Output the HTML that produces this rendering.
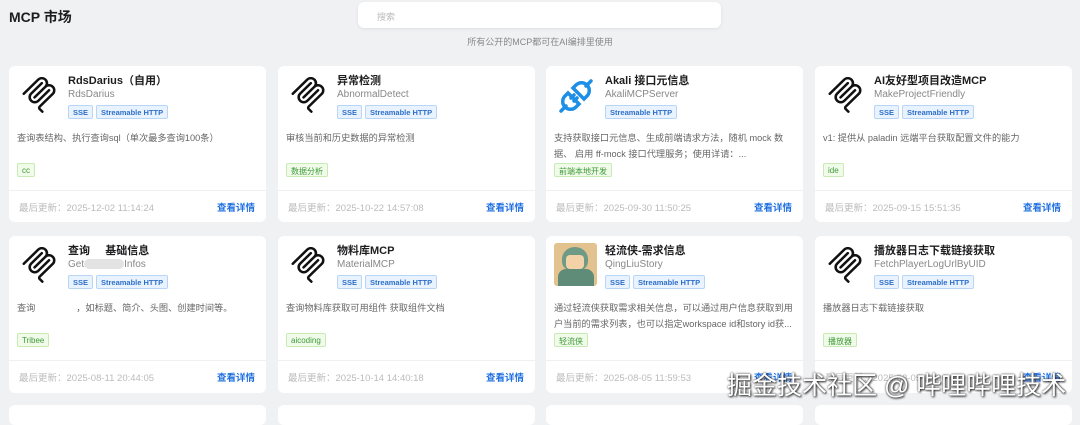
<!DOCTYPE html>
<html><head><meta charset="utf-8"><style>
*{margin:0;padding:0;box-sizing:border-box}
body{width:1080px;height:411px;overflow:hidden;background:#f0f1f3;font-family:"Liberation Sans","Noto Sans CJK SC",sans-serif;position:relative}
.h{position:absolute;left:9px;top:7px;font-size:14px;font-weight:bold;color:#1d1d1f}
.search{position:absolute;left:358px;top:2px;width:363px;height:26px;background:#fff;border-radius:6px;box-shadow:0 1px 3px rgba(0,0,0,.08);font-size:9px;color:#bbb;padding:8px 0 0 19px}
.sub{position:absolute;left:0;width:1080px;text-align:center;top:35px;font-size:9px;color:#888}
.card{position:absolute;width:257px;background:#fff;border-radius:6px}
.r1{top:66px;height:156px}.r2{top:236px;height:157px}.r3{top:405px;height:20px}
.ic{position:absolute;left:12px;top:10px;width:40px;height:40px}
.t{position:absolute;left:59px;top:6px;font-size:11px;font-weight:bold;color:#1d1d1f;white-space:nowrap}
.s{position:absolute;left:59px;top:23px;font-size:10px;color:#888;white-space:nowrap}
.b{position:absolute;top:39px;height:14px;font-size:7.5px;font-weight:bold;color:#2f6fc8;background:#e8f3ff;border:1px solid #b7d6f5;border-radius:2px;padding:2px 4px 0;white-space:nowrap}
.d{position:absolute;left:8px;top:64px;width:242px;font-size:9.2px;line-height:16px;color:#666}
.g{position:absolute;left:8px;height:14px;font-size:8px;color:#3f9a3a;background:#f1fbe9;border:1px solid #c8ebb5;border-radius:2px;padding:2px 4px 0;white-space:nowrap}
.line{position:absolute;left:0;right:0;top:124px;border-top:1px solid #f0f0f0}
.f{position:absolute;left:10px;top:134px;font-size:9.5px;color:#bbb}
.l{position:absolute;right:11px;top:134px;font-size:9.5px;color:#1f6fe0;font-weight:bold}
.wm{position:absolute;left:727px;top:366px;font-size:25px;color:#fff;text-shadow:0 0 2px #333,1px 1px 2px #222;white-space:nowrap}
</style></head><body>
<div class="h">MCP 市场</div>
<div class="search">搜索</div>
<div class="sub">所有公开的MCP都可在AI编排里使用</div>

<svg width="0" height="0" style="position:absolute"><defs><symbol id="mcp" viewBox="0 0 24 24"><path fill="#111" d="M15.688 2.343a2.588 2.588 0 00-3.61 0l-9.626 9.44a.863.863 0 01-1.203 0 .823.823 0 010-1.18l9.626-9.44a4.313 4.313 0 016.016 0 4.116 4.116 0 011.204 3.54 4.3 4.3 0 013.609 1.18l.05.05a4.115 4.115 0 010 5.9l-8.706 8.537a.274.274 0 000 .393l1.788 1.754a.823.823 0 010 1.18.863.863 0 01-1.203 0l-1.788-1.753a1.920 1.920 0 010-2.754l8.706-8.538a2.47 2.47 0 000-3.54l-.05-.049a2.588 2.588 0 00-3.607-.003l-7.172 7.034-.002.002-.098.097a.863.863 0 01-1.204 0 .823.823 0 010-1.18l7.273-7.133a2.47 2.47 0 00-.003-3.537zM14.485 4.703a.823.823 0 000-1.18.863.863 0 00-1.204 0l-7.119 6.982a4.115 4.115 0 000 5.9 4.314 4.314 0 006.016 0l7.12-6.982a.823.823 0 000-1.18.863.863 0 00-1.204 0l-7.119 6.982a2.588 2.588 0 01-3.61 0 2.47 2.47 0 010-3.540l7.12-6.982z"/></symbol></defs></svg>

<!-- row 1 -->
<div class="card r1" style="left:9px">
<svg class="ic" style="left:12px;top:11px;width:36px;height:36px"><use href="#mcp"/></svg>
<div class="t">RdsDarius（自用）</div><div class="s">RdsDarius</div>
<div class="b" style="left:59px">SSE</div><div class="b" style="left:87px">Streamable HTTP</div>
<div class="d">查询表结构、执行查询sql（单次最多查询100条）</div>
<div class="g" style="top:97px">cc</div>
<div class="line"></div><div class="f">最后更新：2025-12-02 11:14:24</div><div class="l">查看详情</div></div>

<div class="card r1" style="left:278px">
<svg class="ic" style="left:12px;top:11px;width:36px;height:36px"><use href="#mcp"/></svg>
<div class="t">异常检测</div><div class="s">AbnormalDetect</div>
<div class="b" style="left:59px">SSE</div><div class="b" style="left:87px">Streamable HTTP</div>
<div class="d">审核当前和历史数据的异常检测</div>
<div class="g" style="top:97px">数据分析</div>
<div class="line"></div><div class="f">最后更新：2025-10-22 14:57:08</div><div class="l">查看详情</div></div>

<div class="card r1" style="left:546px">
<svg class="ic" viewBox="0 0 40 40" style="left:10px;top:10px"><g fill="none" stroke="#1e8fe6" stroke-width="3.5" stroke-linecap="round"><path d="M10 30 L5 35"/><path d="M30 10 L35 5"/><path d="M9 20 a7 7 0 0 0 11 11 l3-3 -11-11z"/><path d="M20 9 a7 7 0 0 1 11 11 l-3 3 -11-11z"/><path d="M15 22 l3-3M18 25 l3-3"/></g></svg>
<div class="t">Akali 接口元信息</div><div class="s">AkaliMCPServer</div>
<div class="b" style="left:59px">Streamable HTTP</div>
<div class="d">支持获取接口元信息、生成前端请求方法，随机 mock 数据、 启用 ff-mock 接口代理服务；使用详请：...</div>
<div class="g" style="top:97px">前端本地开发</div>
<div class="line"></div><div class="f">最后更新：2025-09-30 11:50:25</div><div class="l">查看详情</div></div>

<div class="card r1" style="left:815px">
<svg class="ic" style="left:12px;top:11px;width:36px;height:36px"><use href="#mcp"/></svg>
<div class="t">AI友好型项目改造MCP</div><div class="s">MakeProjectFriendly</div>
<div class="b" style="left:59px">SSE</div><div class="b" style="left:87px">Streamable HTTP</div>
<div class="d">v1: 提供从 paladin 远端平台获取配置文件的能力</div>
<div class="g" style="top:97px">ide</div>
<div class="line"></div><div class="f">最后更新：2025-09-15 15:51:35</div><div class="l">查看详情</div></div>

<!-- row 2 -->
<div class="card r2" style="left:9px">
<svg class="ic" style="left:12px;top:11px;width:36px;height:36px"><use href="#mcp"/></svg>
<div class="t">查询&nbsp;&nbsp;&nbsp;&nbsp;&nbsp;基础信息</div><div class="s">Get<span style="display:inline-block;width:40px;height:10px;background:#e3e3e3;border-radius:5px;vertical-align:middle"></span>Infos</div>
<div class="b" style="left:59px">SSE</div><div class="b" style="left:87px">Streamable HTTP</div>
<div class="d">查询&nbsp;&nbsp;&nbsp;&nbsp;&nbsp;&nbsp;&nbsp;&nbsp;&nbsp;&nbsp;&nbsp;&nbsp;&nbsp;&nbsp;&nbsp;&nbsp;，如标题、简介、头图、创建时间等。</div>
<div class="g" style="top:97px">Tribee</div>
<div class="line"></div><div class="f">最后更新：2025-08-11 20:44:05</div><div class="l">查看详情</div></div>

<div class="card r2" style="left:278px">
<svg class="ic" style="left:12px;top:11px;width:36px;height:36px"><use href="#mcp"/></svg>
<div class="t">物料库MCP</div><div class="s">MaterialMCP</div>
<div class="b" style="left:59px">SSE</div><div class="b" style="left:87px">Streamable HTTP</div>
<div class="d">查询物料库获取可用组件 获取组件文档</div>
<div class="g" style="top:97px">aicoding</div>
<div class="line"></div><div class="f">最后更新：2025-10-14 14:40:18</div><div class="l">查看详情</div></div>

<div class="card r2" style="left:546px">
<div class="ic" style="left:8px;top:7px;width:43px;height:43px;background:#e2c38f;border-radius:3px;overflow:hidden"><div style="position:absolute;left:8px;top:4px;width:26px;height:24px;background:#6f9a86;border-radius:50% 50% 40% 40%"></div><div style="position:absolute;left:12px;top:12px;width:18px;height:14px;background:#f3d2a8;border-radius:4px"></div><div style="position:absolute;left:4px;top:26px;width:36px;height:20px;background:#5f8c78;border-radius:8px 8px 0 0"></div></div>
<div class="t">轻流侠-需求信息</div><div class="s">QingLiuStory</div>
<div class="b" style="left:59px">SSE</div><div class="b" style="left:87px">Streamable HTTP</div>
<div class="d" style="height:32px;overflow:hidden">通过轻流侠获取需求相关信息，可以通过用户信息获取到用户当前的需求列表，也可以指定workspace id和story id获...</div>
<div class="g" style="top:97px">轻流侠</div>
<div class="line"></div><div class="f">最后更新：2025-08-05 11:59:53</div><div class="l">查看详情</div></div>

<div class="card r2" style="left:815px">
<svg class="ic" style="left:12px;top:11px;width:36px;height:36px"><use href="#mcp"/></svg>
<div class="t">播放器日志下载链接获取</div><div class="s">FetchPlayerLogUrlByUID</div>
<div class="b" style="left:59px">SSE</div><div class="b" style="left:87px">Streamable HTTP</div>
<div class="d">播放器日志下载链接获取</div>
<div class="g" style="top:97px">播放器</div>
<div class="line"></div><div class="f">最后更新：2025-08-05 11:00:00</div><div class="l">查看详情</div></div>

<div class="card r3" style="left:9px"></div><div class="card r3" style="left:278px"></div><div class="card r3" style="left:546px"></div><div class="card r3" style="left:815px"></div>

<div class="wm">掘金技术社区 @ 哔哩哔哩技术</div>
</body></html>
